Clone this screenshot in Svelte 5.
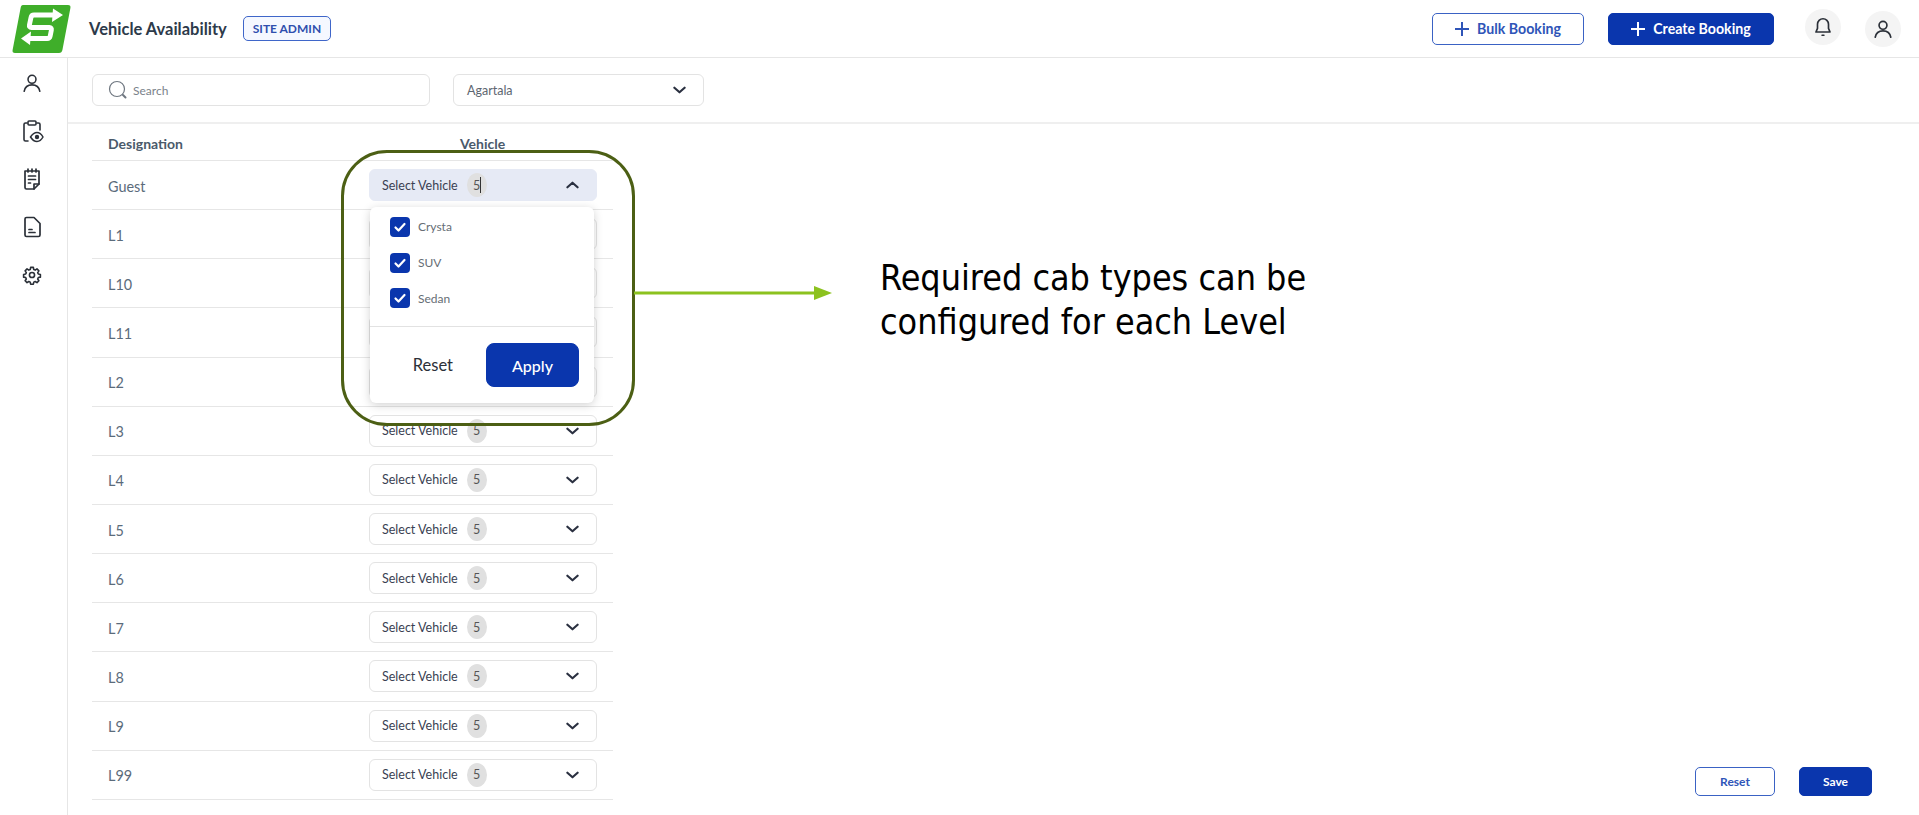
<script>
    const levels = ['L1', 'L10', 'L11', 'L2', 'L3', 'L4', 'L5', 'L6', 'L7', 'L8', 'L9', 'L99'];
    const cabs = ['Crysta', 'SUV', 'Sedan'];
</script>

<div class="page">
    <header class="topbar">
        <svg class="logo" viewBox="0 0 60 48" width="60" height="48">
            <path d="M11 0h45q3 0 2.400 3l-8 42q-.6 3-3.400 3H3q-3 0-2.400-3l8-42Q9 0 11 0z" fill="#3fae2a"/>
            <path d="M43 10H22q-2.500 0-3 2.500l-1.600 7.500q-.5 2.500 2 2.500h18q2.500 0 2 2.500l-1.200 6q-.5 2.500-3 2.500H17" fill="none" stroke="#fff" stroke-width="4.800"/>
            <path d="M41 3.500l10 6.500-11 7zM19 26.500l-10 7 9 6.500z" fill="#fff"/>
        </svg>
        <h1>Vehicle Availability</h1>
        <span class="role">SITE ADMIN</span>
        <div class="actions">
            <button class="btn outline bulk">
                <svg class="plus" viewBox="0 0 14 14" width="14" height="14"><path d="M7 0v14M0 7h14"/></svg>
                Bulk Booking
            </button>
            <button class="btn solid create">
                <svg class="plus" viewBox="0 0 14 14" width="14" height="14"><path d="M7 0v14M0 7h14"/></svg>
                Create Booking
            </button>
            <span class="round bell">
                <svg viewBox="0 0 24 24" width="22" height="22" fill="none" stroke="#2b3038" stroke-width="1.800" stroke-linejoin="round" stroke-linecap="round">
                    <path d="M12 3a6 6 0 0 0-6 6v4.500L4.300 17.500h15.400L18 13.500V9a6 6 0 0 0-6-6z"/>
                    <path d="M11 21h2"/>
                </svg>
            </span>
            <span class="round">
                <svg viewBox="0 0 24 24" width="22" height="22" fill="none" stroke="#2b3038" stroke-width="1.800" stroke-linecap="round">
                    <circle cx="12" cy="8" r="4.300"/>
                    <path d="M3.500 21c.8-4.500 4-7 8.500-7s7.700 2.500 8.500 7"/>
                </svg>
            </span>
        </div>
    </header>

    <div class="body">
        <nav class="sidebar">
            <svg viewBox="-1 -1 26 26" width="24" height="24" fill="none" stroke="#2b3038" stroke-width="1.700" stroke-linecap="round">
                <circle cx="12" cy="8" r="4.300"/>
                <path d="M3.500 21c.8-4.500 4-7 8.500-7s7.700 2.500 8.500 7"/>
            </svg>
            <svg viewBox="0 0 24 24" width="24" height="24" fill="none" stroke="#2b3038" stroke-width="1.600" stroke-linecap="round">
                <path d="M7 4H5.500Q4 4 4 5.500V20.500Q4 22 5.500 22H8M17 4h1.500Q20 4 20 5.500V11"/>
                <rect x="8" y="2" width="8" height="4" rx="1"/>
                <path d="M10.500 18q3-4.500 6.500-4.500t6 4.500q-2.500 4.500-6 4.500t-6.500-4.500z" fill="#fff" stroke-width="1.500"/>
                <circle cx="17" cy="18" r="2.200" fill="#2b3038" stroke="none"/>
            </svg>
            <svg viewBox="0 0 24 24" width="24" height="24" fill="none" stroke="#2b3038" stroke-width="1.700" stroke-linecap="round" stroke-linejoin="round">
                <path d="M5 4h14v13l-5 5H6.500Q5 22 5 20.500z"/>
                <path d="M8 2v3M12 2v3M16 2v3M8.500 9h7M8.500 12.500h7M8.500 16h2M14 22v-5h5"/>
            </svg>
            <svg viewBox="0 0 24 24" width="24" height="24" fill="none" stroke="#2b3038" stroke-width="1.700" stroke-linecap="round" stroke-linejoin="round">
                <path d="M6.500 2.500H14L20 8.500V20q0 1.500-1.500 1.500h-12Q5 21.500 5 20V4q0-1.500 1.500-1.500z"/>
                <path d="M9 14.500h3M9 17.500h6"/>
            </svg>
            <svg viewBox="-3 -3 30 30" width="24" height="24" fill="none" stroke="#2b3038" stroke-width="2" stroke-linejoin="round">
                <circle cx="12" cy="12" r="3.200"/>
                <path d="M10.300 2.500h3.400l.5 2.600 1.800.8 2.200-1.500 2.400 2.400-1.500 2.200.8 1.800 2.600.5v3.400l-2.600.5-.8 1.800 1.500 2.200-2.400 2.400-2.200-1.500-1.800.8-.5 2.600h-3.400l-.5-2.600-1.800-.8-2.200 1.500-2.400-2.400 1.500-2.200-.8-1.800-2.600-.5v-3.400l2.600-.5.8-1.800-1.500-2.200 2.400-2.400 2.200 1.500 1.800-.8z"/>
            </svg>
        </nav>

        <main class="content">
            <div class="filters">
                <div class="field search">
                    <svg viewBox="0 0 20 20" width="20" height="20" fill="none" stroke="#6f7780" stroke-width="1.200" stroke-linecap="round">
                        <circle cx="9" cy="9" r="7.500"/>
                        <path d="M15 15l2.500 2.500" stroke-width="2"/>
                    </svg>
                    <span>Search</span>
                </div>
                <div class="field city">
                    <span>Agartala</span>
                    <svg class="chev" viewBox="0 0 14 8" width="13" height="8"><path d="M1.500 1.500L7 6.500l5.500-5"/></svg>
                </div>
            </div>

            <div class="table">
                <div class="row head">
                    <span>Designation</span>
                    <span class="veh">Vehicle</span>
                </div>
                <div class="row">
                    <span class="lab">Guest</span>
                    <div class="select open">
                        <span class="txt">Select Vehicle</span>
                        <span class="count">5<i class="caret"></i></span>
                        <svg class="chev" viewBox="0 0 14 8" width="13" height="8"><path d="M1.500 6.500L7 1.500l5.500 5"/></svg>
                    </div>
                </div>
                {#each levels as level}
                    <div class="row">
                        <span class="lab">{level}</span>
                        <div class="select">
                            <span class="txt">Select Vehicle</span>
                            <span class="count">5</span>
                            <svg class="chev" viewBox="0 0 14 8" width="13" height="8"><path d="M1.500 1.500L7 6.500l5.500-5"/></svg>
                        </div>
                    </div>
                {/each}
            </div>

            <div class="footer">
                <button class="btn outline small">Reset</button>
                <button class="btn solid small">Save</button>
            </div>
        </main>
    </div>

    <div class="dropdown">
        <ul>
            {#each cabs as cab}
                <li>
                    <span class="check">
                        <svg viewBox="0 0 20 20" width="20" height="20" fill="none" stroke="#fff" stroke-width="2.200" stroke-linecap="round" stroke-linejoin="round"><path d="M5.500 10.500l3 3 6-6.500"/></svg>
                    </span>
                    {cab}
                </li>
            {/each}
        </ul>
        <div class="drop-actions">
            <button class="plain">Reset</button>
            <button class="btn solid apply">Apply</button>
        </div>
    </div>

    <div class="callout"></div>
    <svg class="arrow" viewBox="0 0 198 20" width="198" height="20">
        <path d="M0 10H182" stroke="#8cc21f" stroke-width="3"/>
        <path d="M180 3l18 7-18 7z" fill="#8cc21f"/>
    </svg>
    <p class="note">Required cab types can be<br>configured for each Level</p>
</div>

<style>
    :global(body) {
        margin: 0;
        background: #fff;
        font-family: Lato, "Open Sans", sans-serif;
        color: #2b3038;
    }
    .page {
        position: relative;
        height: 815px;
        overflow: hidden;
    }
    .topbar {
        height: 57px;
        display: flex;
        align-items: center;
        padding: 0 18px 0 12px;
        border-bottom: 1px solid #e6e6e6;
    }
    .logo {
        margin-right: 17px;
    }
    h1 {
        margin: 0;
        font-size: 16.500px;
        font-weight: 700;
        color: #2d3a4a;
    }
    .role {
        margin-left: 16px;
        height: 23px;
        line-height: 23px;
        padding: 0 9px;
        border: 1.500px solid #3f66c9;
        border-radius: 5px;
        background: #f5f8ff;
        color: #2f4fae;
        font-size: 12px;
        font-weight: 700;
    }
    .actions {
        margin-left: auto;
        display: flex;
        align-items: center;
    }
    .btn {
        font-family: inherit;
        font-weight: 700;
        border-radius: 5px;
        box-sizing: border-box;
        cursor: pointer;
    }
    .outline {
        background: #fff;
        border: 1.500px solid #3a62c4;
        color: #2f55b8;
    }
    .solid {
        background: #0a36ad;
        border: 1px solid #0a36ad;
        color: #fff;
    }
    .bulk, .create {
        height: 32px;
        font-size: 14.200px;
        display: flex;
        align-items: center;
        justify-content: center;
        gap: 8px;
    }
    .bulk {
        width: 152px;
    }
    .create {
        width: 166px;
        margin: 0 31px 0 24px;
    }
    .plus {
        stroke: currentColor;
        stroke-width: 2;
        fill: none;
    }
    .round {
        width: 36px;
        height: 36px;
        border-radius: 50%;
        background: #f4f4f4;
        display: flex;
        align-items: center;
        justify-content: center;
    }
    .bell {
        margin-right: 24px;
        margin-top: -3px;
    }
    .body {
        display: flex;
        height: 757px;
    }
    .sidebar {
        width: 68px;
        flex: none;
        border-right: 1px solid #e6e6e6;
        box-sizing: border-box;
        padding: 12.500px 4px 0 0;
        display: flex;
        flex-direction: column;
        align-items: center;
        gap: 24px;
    }
    .content {
        flex: 1;
        position: relative;
    }
    .filters {
        height: 66px;
        box-sizing: border-box;
        padding: 16px 0 0 24px;
        display: flex;
        gap: 23px;
        border-bottom: 2px solid #efefef;
    }
    .field {
        height: 32px;
        box-sizing: border-box;
        border: 1px solid #e3e3e3;
        border-radius: 6px;
        display: flex;
        align-items: center;
        font-size: 12px;
        color: #5d6670;
    }
    .search {
        width: 338px;
        padding-left: 15px;
        gap: 5px;
        color: #7b828a;
    }
    .city {
        width: 251px;
        padding: 0 17px 0 13px;
        justify-content: space-between;
        font-size: 12.500px;
    }
    .chev {
        fill: none;
        stroke: #2a3040;
        stroke-width: 2.300;
        stroke-linecap: round;
        stroke-linejoin: round;
    }
    .table {
        width: 521px;
        margin-left: 24px;
    }
    .row {
        height: 49.150px;
        box-sizing: border-box;
        border-bottom: 1px solid #e6e6e6;
        display: flex;
        align-items: center;
        padding-left: 16px;
    }
    .head {
        height: 37px;
        padding-top: 3px;
        font-size: 14px;
        font-weight: 700;
        color: #4a5a6b;
    }
    .head span:first-child, .lab {
        width: 261px;
        flex: none;
    }
    .veh {
        margin-left: 91px;
    }
    .lab {
        font-size: 14.400px;
        padding-top: 2px;
        color: #5b6b7b;
    }
    .select {
        width: 228px;
        height: 32px;
        box-sizing: border-box;
        border: 1px solid #e3e3e3;
        border-radius: 6px;
        display: flex;
        align-items: center;
        padding: 0 17px 0 12px;
        font-size: 12.500px;
        color: #3a3f52;
    }
    .select.open {
        background: #e6eaf5;
        border-color: #e6eaf5;
    }
    .count {
        position: relative;
        width: 20px;
        height: 24px;
        margin-left: 9px;
        border-radius: 50%;
        background: #e0e0e0;
        display: flex;
        align-items: center;
        justify-content: center;
        color: #555;
    }
    .caret {
        position: absolute;
        left: 13px;
        top: 4px;
        width: 1px;
        height: 16px;
        background: #333;
    }
    .select .chev {
        margin-left: auto;
    }
    .footer {
        position: absolute;
        right: 47px;
        top: 709px;
        display: flex;
        gap: 24px;
    }
    .small {
        height: 29px;
        font-size: 12px;
    }
    .outline.small {
        width: 80px;
    }
    .solid.small {
        width: 73px;
    }
    .dropdown {
        position: absolute;
        left: 370px;
        top: 207px;
        width: 224px;
        height: 196px;
        background: #fff;
        border-radius: 6px;
        box-shadow: 0 2px 10px rgba(0, 0, 0, 0.18);
    }
    ul {
        list-style: none;
        margin: 0;
        padding: 2px 0 0 20px;
        height: 120px;
        box-sizing: border-box;
        border-bottom: 1px solid #e2e2e2;
    }
    li {
        height: 35.800px;
        display: flex;
        align-items: center;
        gap: 8px;
        font-size: 12px;
        color: #666d75;
    }
    .check {
        width: 20px;
        height: 20px;
        border-radius: 4px;
        background: #0a36ad;
    }
    .check svg {
        display: block;
    }
    .drop-actions {
        display: flex;
        align-items: center;
        justify-content: flex-end;
        padding: 16px 15px 0 0;
    }
    .plain {
        margin-right: 33px;
        padding: 0;
        background: none;
        border: none;
        font-family: inherit;
        font-size: 16.500px;
        color: #2b3038;
    }
    .apply {
        width: 93px;
        height: 44px;
        font-size: 16px;
        font-weight: 500;
        border-radius: 8px;
    }
    .callout {
        position: absolute;
        left: 341px;
        top: 150px;
        width: 294px;
        height: 276px;
        box-sizing: border-box;
        border: 3px solid #4c5f14;
        border-radius: 46px;
    }
    .arrow {
        position: absolute;
        left: 634px;
        top: 283px;
    }
    .note {
        position: absolute;
        left: 880px;
        top: 256px;
        margin: 0;
        font-family: "DejaVu Sans Condensed", "DejaVu Sans", sans-serif;
        font-stretch: condensed;
        font-size: 35.600px;
        line-height: 44px;
        color: #000;
    }
</style>
